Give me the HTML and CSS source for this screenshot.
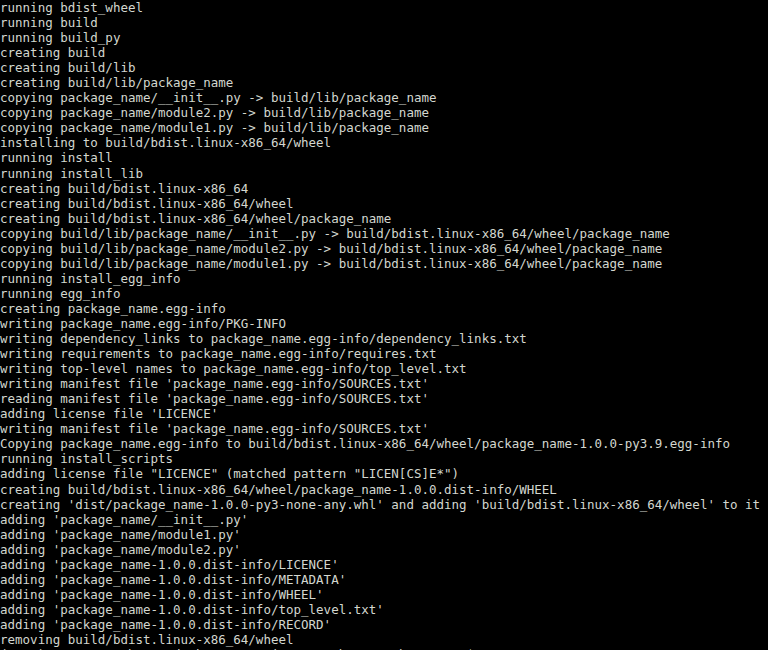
FILE: index.html
```html
<!DOCTYPE html>
<html lang="en">
<head>
<meta charset="utf-8">
<title>Terminal</title>
<link rel="stylesheet" href="styles.css">
</head>
<body>
<main class="terminal">
<pre class="output">running bdist_wheel
running build
running build_py
creating build
creating build/lib
creating build/lib/package_name
copying package_name/__init__.py -&gt; build/lib/package_name
copying package_name/module2.py -&gt; build/lib/package_name
copying package_name/module1.py -&gt; build/lib/package_name
installing to build/bdist.linux-x86_64/wheel
running install
running install_lib
creating build/bdist.linux-x86_64
creating build/bdist.linux-x86_64/wheel
creating build/bdist.linux-x86_64/wheel/package_name
copying build/lib/package_name/__init__.py -&gt; build/bdist.linux-x86_64/wheel/package_name
copying build/lib/package_name/module2.py -&gt; build/bdist.linux-x86_64/wheel/package_name
copying build/lib/package_name/module1.py -&gt; build/bdist.linux-x86_64/wheel/package_name
running install_egg_info
running egg_info
creating package_name.egg-info
writing package_name.egg-info/PKG-INFO
writing dependency_links to package_name.egg-info/dependency_links.txt
writing requirements to package_name.egg-info/requires.txt
writing top-level names to package_name.egg-info/top_level.txt
writing manifest file 'package_name.egg-info/SOURCES.txt'
reading manifest file 'package_name.egg-info/SOURCES.txt'
adding license file 'LICENCE'
writing manifest file 'package_name.egg-info/SOURCES.txt'
Copying package_name.egg-info to build/bdist.linux-x86_64/wheel/package_name-1.0.0-py3.9.egg-info
running install_scripts
adding license file "LICENCE" (matched pattern "LICEN[CS]E*")
creating build/bdist.linux-x86_64/wheel/package_name-1.0.0.dist-info/WHEEL
creating 'dist/package_name-1.0.0-py3-none-any.whl' and adding 'build/bdist.linux-x86_64/wheel' to it
adding 'package_name/__init__.py'
adding 'package_name/module1.py'
adding 'package_name/module2.py'
adding 'package_name-1.0.0.dist-info/LICENCE'
adding 'package_name-1.0.0.dist-info/METADATA'
adding 'package_name-1.0.0.dist-info/WHEEL'
adding 'package_name-1.0.0.dist-info/top_level.txt'
adding 'package_name-1.0.0.dist-info/RECORD'
removing build/bdist.linux-x86_64/wheel
<span class="prompt">(venv) username@ubuntu-desktop:~/projects/pythons/package_name$ </span><span class="cursor"> </span></pre>
</main>
</body>
</html>
```
FILE: styles.css
```css
html, body {
  margin: 0;
  padding: 0;
  background: #000000;
  height: 100%;
  overflow: hidden;
}

.terminal {
  background: #000000;
  padding: 0;
}

.output {
  margin: 0;
  padding: 0;
  font-family: "DejaVu Sans Mono", "Liberation Mono", monospace;
  font-size: 12.5px;
  line-height: 15.05px;
  color: #d3d7cf;
  white-space: pre;
}

.prompt {
  color: #d3d7cf;
}

.cursor {
  display: inline-block;
  width: 7.5px;
  height: 14px;
  background: #c8c8c8;
  vertical-align: -3px;
}
```
